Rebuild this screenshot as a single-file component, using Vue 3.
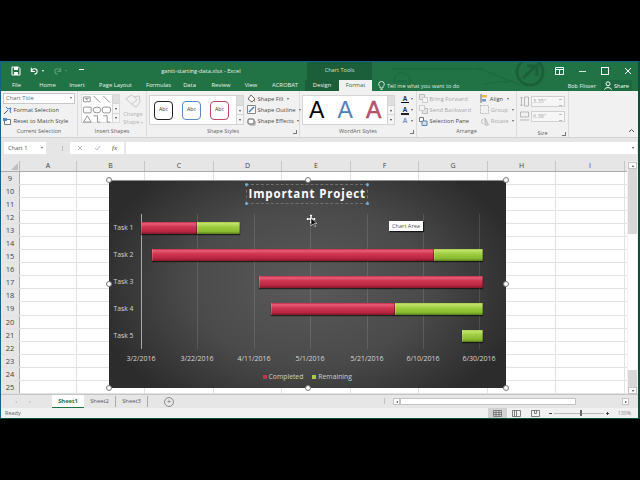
<template>
  <div class="screen">
    <div class="window">
      <!-- title bar + tabs share the green band -->
      <div class="head">
        <svg class="circuit" width="639" height="29" viewBox="0 0 639 29">
          <g fill="none" stroke="#1d6a40" stroke-width="1.500">
            <path d="M391 7h89l39 16M482 22l15-2h10" />
            <circle cx="480" cy="7" r="1.500" fill="#1d6a40" />
            <circle cx="401" cy="19" r="8" />
            <path d="M396 19h10" />
          </g>
          <g fill="none" stroke="#1b6039" stroke-width="3">
            <circle cx="529" cy="10" r="13" />
            <path d="M522 16l13-12M526 4h10v10" />
          </g>
        </svg>
        <header class="titlebar">
          <div class="qat">
            <svg width="10" height="10" viewBox="0 0 10 10"><path d="M1 1h6.500L9 2.500V9H1z" fill="none" stroke="#fff" /><path d="M3 1h4v3H3zM3 6h4v3H3z" fill="#fff" /></svg>
            <svg class="undo" width="9" height="10" viewBox="0 0 10 10"><path d="M2 5a3 3 0 1 1 3 3.500M1.500 1.500v4h4" fill="none" stroke="#fff" stroke-width="1.200" /></svg>
            <span class="caret white"></span>
            <svg class="redo" width="9" height="10" viewBox="0 0 10 10"><path d="M8 5a3 3 0 1 0-3 3.500M8.500 1.500v4h-4" fill="none" stroke="#5c9c78" stroke-width="1.200" /></svg>
            <span class="caret dim"></span>
            <span class="customize"></span>
          </div>
          <div class="doc-title">gantt-starting-data.xlsx - Excel</div>
          <div class="tools-label">Chart Tools</div>
          <div class="win-buttons">
            <svg width="9" height="8" viewBox="0 0 9 8"><path d="M.5.500h8v7h-8zM.5 2.500h8M4.500 2.500v5" fill="none" stroke="#fff" /></svg>
            <span class="min"></span>
            <span class="max"></span>
            <svg width="8" height="8" viewBox="0 0 8 8"><path d="M1 1l6 6M7 1L1 7" stroke="#fff" stroke-width="1" /></svg>
          </div>
        </header>

        <nav class="tabs">
          <span v-for="t in tabs" :key="t.name" class="tab" :style="{ width: t.w + 'px' }" :class="t.cls">{{ t.name }}</span>
          <span class="tell">
            <svg width="7" height="9" viewBox="0 0 7 9"><path d="M3.500.500a2.700 2.700 0 0 0-1.500 5V7h3V5.500a2.700 2.700 0 0 0-1.500-5zM2.500 8.500h2" fill="none" stroke="#fff" stroke-width=".8" /></svg>
            Tell me what you want to do
          </span>
          <span class="user">Bob Flisser</span>
          <span class="share">
            <svg width="8" height="9" viewBox="0 0 8 9"><circle cx="4" cy="2.800" r="2" fill="none" stroke="#fff" /><path d="M.5 8.500c.5-2.500 6.500-2.500 7 0" fill="none" stroke="#fff" /></svg>
            Share
          </span>
        </nav>
      </div>

      <!-- ribbon -->
      <section class="ribbon">
        <div class="group" style="width: 77px">
          <div class="group-body col">
            <div class="dropdown">Chart Title<span class="caret"></span></div>
            <div class="cmd">
              <svg width="9" height="9" viewBox="0 0 9 9"><path d="M1 8l4-4" stroke="#555" /><path d="M3 1l2 2 3-1-1 3 1 2" fill="none" stroke="#2f7ec0" /></svg>
              Format Selection
            </div>
            <div class="cmd">
              <svg width="9" height="9" viewBox="0 0 9 9"><path d="M1.500 2.500h6v5h-6z" fill="#fff" stroke="#777" /><path d="M0 1h4v3H0z" fill="#4a8cc7" /></svg>
              Reset to Match Style
            </div>
          </div>
          <div class="group-label">Current Selection</div>
        </div>

        <div class="group" style="width: 69px">
          <div class="group-body row">
            <div class="shape-gallery">
              <svg width="31" height="29" viewBox="0 0 31 29">
                <g fill="none" stroke="#777" stroke-width=".8">
                  <path d="M1.500 1.500h7v5h-7z" /><path d="M3 3l3 2M4 3h3" />
                  <path d="M12 .5l7 7M22 .5l7 7" />
                  <rect x="1.500" y="12" width="8" height="6" rx="1" />
                  <ellipse cx="15.500" cy="15" rx="4" ry="3" />
                  <rect x="21" y="12" width="8.500" height="6" rx="2" />
                  <path d="M5.500 21l-4 6.500h8zM12 21h4v6.500h3M22 21h4v6.500h3" />
                </g>
              </svg>
              <div class="gallery-scroll small"><i class="up dis"></i><i class="dn"></i><i class="more"></i></div>
            </div>
            <div class="change-shape">
              <svg width="16" height="15" viewBox="0 0 17 16"><path d="M1 5l6-4 6 5-6 5zM10 3l5-1 1 6-4 6-5-3" fill="none" stroke="#c4c4c4" /></svg>
              <span>Change</span><span>Shape <i class="caret dim2"></i></span>
            </div>
          </div>
          <div class="group-label">Insert Shapes</div>
        </div>

        <div class="group" style="width: 153px">
          <div class="group-body row">
            <div class="style-gallery">
              <span v-for="s in swatches" :key="s" class="swatch" :style="{ borderColor: s }">Abc</span>
              <div class="gallery-scroll"><i class="up dis"></i><i class="dn"></i><i class="more"></i></div>
            </div>
            <div class="col cmds">
              <div class="cmd"><svg width="9" height="9" viewBox="0 0 9 9"><path d="M1 5l3-4 4 4-3 3z" fill="#fff" stroke="#666" /><path d="M7.500 6v2" stroke="#c8a24a" /></svg>Shape Fill<i class="caret"></i></div>
              <div class="cmd"><svg width="9" height="9" viewBox="0 0 9 9"><path d="M.5.500h8v8h-8z" fill="#fff" stroke="#888" /><path d="M2 7l5-5" stroke="#4a7db5" stroke-width="1.500" /></svg>Shape Outline<i class="caret"></i></div>
              <div class="cmd"><svg width="9" height="9" viewBox="0 0 9 9"><rect x="1" y="2" width="6" height="5" rx="1" fill="#fff" stroke="#555" /><path d="M3 8h5V4" fill="none" stroke="#999" /></svg>Shape Effects<i class="caret"></i></div>
            </div>
          </div>
          <div class="group-label">Shape Styles<i class="launch"></i></div>
        </div>

        <div class="group" style="width: 117px">
          <div class="group-body row">
            <div class="art-gallery">
              <span class="art black">A</span>
              <span class="art blue">A</span>
              <span class="art red">A</span>
              <div class="gallery-scroll"><i class="up dis"></i><i class="dn"></i><i class="more"></i></div>
            </div>
            <div class="col art-cmds">
              <div class="art-cmd"><span class="mini-a">A</span><i class="bar" style="background:#000"></i><i class="caret"></i></div>
              <div class="art-cmd"><span class="mini-a">A</span><i class="bar" style="background:#222"></i><i class="caret"></i></div>
              <div class="art-cmd"><span class="mini-a soft">A</span><i class="caret"></i></div>
            </div>
          </div>
          <div class="group-label">WordArt Styles<i class="launch"></i></div>
        </div>

        <div class="group" style="width: 100px">
          <div class="group-body row">
            <div class="col" style="width: 62px">
              <div class="cmd off"><svg width="9" height="9" viewBox="0 0 9 9"><path d="M.5.500h5v5h-5z" fill="#e6e6e6" stroke="#bbb" /><path d="M3.500 3.500h5v5h-5z" fill="#f4f4f4" stroke="#ccc" /></svg>Bring Forward</div>
              <div class="cmd off"><svg width="9" height="9" viewBox="0 0 9 9"><path d="M3.500 3.500h5v5h-5z" fill="#e6e6e6" stroke="#bbb" /><path d="M.5.500h5v5h-5z" fill="#f4f4f4" stroke="#ccc" /></svg>Send Backward</div>
              <div class="cmd"><svg width="9" height="9" viewBox="0 0 9 9"><path d="M.5.500h4v4h-4z" fill="#fff" stroke="#777" /><path d="M3 4h5v4.500H3z" fill="#cfe0f0" stroke="#5c89b0" /></svg>Selection Pane</div>
            </div>
            <div class="col" style="width: 34px">
              <div class="cmd"><svg width="8" height="9" viewBox="0 0 8 9"><path d="M1 0v9" stroke="#666" /><path d="M2 1h5v2.500H2z" fill="#e7b94a" /><path d="M2 5h4v2.500H2z" fill="#6d9bc9" /></svg>Align<i class="caret"></i></div>
              <div class="cmd off"><svg width="9" height="9" viewBox="0 0 9 9"><path d="M.5.500h8v8h-8z" fill="none" stroke="#bbb" stroke-dasharray="2 1" /></svg>Group<i class="caret"></i></div>
              <div class="cmd off"><svg width="9" height="9" viewBox="0 0 9 9"><path d="M5 1v7h3.500z" fill="#ddd" stroke="#bbb" /><path d="M3 2A3 3 0 0 0 3 7" fill="none" stroke="#bbb" /></svg>Rotate<i class="caret"></i></div>
            </div>
          </div>
          <div class="group-label">Arrange</div>
        </div>

        <div class="group" style="width: 52px">
          <div class="group-body col size">
            <div class="size-row">
              <svg width="9" height="11" viewBox="0 0 9 11"><path d="M1.500 1v9M0 2.500L1.500 1 3 2.500M0 8.500L1.500 10 3 8.500M4.500 1h4v9h-4z" fill="none" stroke="#aaa" stroke-width=".8" /></svg>
              <span class="spin">3.35"<i class="arrows"></i></span>
            </div>
            <div class="size-row">
              <svg width="9" height="11" viewBox="0 0 9 11"><path d="M.5 1h8v5h-8zM0 9h9" fill="none" stroke="#aaa" stroke-width=".8" /></svg>
              <span class="spin">6.38"<i class="arrows"></i></span>
            </div>
          </div>
          <div class="group-label">Size<i class="launch"></i></div>
        </div>

        <div class="collapse"><svg width="7" height="5" viewBox="0 0 7 5"><path d="M1 4l2.500-2.500L6 4" fill="none" stroke="#555" /></svg></div>
      </section>

      <!-- formula bar -->
      <div class="formula">
        <div class="namebox">Chart 1<span class="caret"></span></div>
        <i class="grip"></i>
        <div class="fx">
          <svg width="6" height="6" viewBox="0 0 6 6"><path d="M1 1l4 4M5 1L1 5" stroke="#bdbdbd" /></svg>
          <svg width="7" height="6" viewBox="0 0 7 6"><path d="M1 3l2 2 3-4" fill="none" stroke="#bdbdbd" /></svg>
          <em>fx</em>
        </div>
        <div class="input"><span class="caret"></span></div>
      </div>

      <!-- sheet -->
      <div class="sheet">
        <div class="sheet-main">
          <div class="col-heads">
            <div class="corner"><i></i></div>
            <div v-for="c in columns" :key="c.name" class="col-head" :style="{ width: c.w + 'px' }">{{ c.name }}</div>
          </div>
          <div class="grid">
            <div v-for="r in rows" :key="r" class="row-line">
              <div class="row-head">{{ r }}</div>
              <div v-for="c in columns" :key="c.name" class="cell" :style="{ width: c.w + 'px' }"></div>
            </div>

            <!-- chart overlay -->
            <div class="chart">
              <div class="chart-title-wrap">
                <div class="chart-title">
                  Important Project
                  <i class="blue-dot tl"></i><i class="blue-dot tr"></i><i class="blue-dot bl"></i><i class="blue-dot br"></i>
                </div>
              </div>
              <div class="plot-row">
                <div class="task-names">
                  <span v-for="t in tasks" :key="t.name">{{ t.name }}</span>
                </div>
                <div class="plot">
                  <i v-for="(d, i) in dates" :key="d" class="gridline" :style="{ left: dayX(i * 20) + 'px' }"></i>
                  <div v-for="t in tasks" :key="t.name" class="track">
                    <span v-if="t.done" class="bar-part done" :style="barStyle(t.start, t.done)"></span>
                    <span v-if="t.left" class="bar-part todo" :style="barStyle(t.start + t.done, t.left)"></span>
                  </div>
                </div>
              </div>
              <div class="axis">
                <span v-for="(d, i) in dates" :key="d" class="axis-label" :style="{ left: dayX(i * 20) + 'px' }">{{ d }}</span>
              </div>
              <div class="legend">
                <i class="key red-key"></i>Completed
                <i class="key green-key"></i>Remaining
              </div>
              <i v-for="h in handles" :key="h" class="handle" :class="h"></i>
            </div>
            <svg class="pointer" width="12" height="14" viewBox="0 0 12 14">
              <path d="M5 0l2 2H6v2h2V3l2 2-2 2V6H6v2h1L5 10 3 8h1V6H2v1L0 5l2-2v1h2V2H3z" fill="#fff" stroke="#333" stroke-width=".5" />
              <path d="M5 4l0 8 2-2 2 3 1-1-2-2.500h3z" fill="#111" stroke="#fff" stroke-width=".5" />
            </svg>
            <div class="tip">Chart Area</div>
          </div>
        </div>
        <div class="vscroll">
          <i class="sb-btn"><b class="tri-up"></b></i>
          <div class="v-track"><div class="v-thumb"></div></div>
          <i class="sb-btn"><b class="tri-down"></b></i>
        </div>
      </div>

      <!-- sheet tabs -->
      <div class="sheet-tabs">
        <div class="sheet-nav"><b class="tri-left dim"></b><b class="tri-right dim"></b></div>
        <span class="sheet-tab active">Sheet1</span>
        <span class="sheet-tab">Sheet2</span>
        <span class="sheet-tab">Sheet3</span>
        <span class="add-sheet">+</span>
        <i class="tab-grip"></i>
        <div class="hscroll">
          <i class="sb-btn"><b class="tri-left"></b></i>
          <div class="h-thumb"></div>
          <i class="sb-btn end"><b class="tri-right"></b></i>
        </div>
      </div>

      <!-- status bar -->
      <footer class="status">
        <span>Ready</span>
        <div class="views">
          <span class="view on"><svg width="9" height="7" viewBox="0 0 9 7"><path d="M.5.500h8v6h-8zM.5 2.500h8M.5 4.500h8M3 .500v6M6 .500v6" fill="none" stroke="#666" stroke-width=".7" /></svg></span>
          <span class="view"><svg width="9" height="7" viewBox="0 0 9 7"><path d="M.5.500h8v6h-8zM4.500.500v6M2.500.500v6" fill="none" stroke="#666" stroke-width=".8" /></svg></span>
          <span class="view"><svg width="9" height="7" viewBox="0 0 9 7"><path d="M.5.500h8v6h-8zM3.500.500v3h2v-3" fill="none" stroke="#666" stroke-width=".8" /></svg></span>
        </div>
        <div class="zoom">
          <span class="z-btn"></span>
          <div class="z-track"><i></i></div>
          <span class="z-btn plus"></span>
          <span class="z-val">130%</span>
        </div>
      </footer>
    </div>
  </div>
</template>

<script setup>
const tabs = [
  { name: 'File', w: 25 },
  { name: 'Home', w: 37 },
  { name: 'Insert', w: 22 },
  { name: 'Page Layout', w: 55 },
  { name: 'Formulas', w: 31 },
  { name: 'Data', w: 31 },
  { name: 'Review', w: 32 },
  { name: 'View', w: 28 },
  { name: 'ACROBAT', w: 40 },
  { name: 'Design', w: 34, cls: 'design' },
  { name: 'Format', w: 33, cls: 'format' }
]

const swatches = ['#222222', '#5b8ac4', '#bd4b63']

const columns = [
  { name: 'A', w: 57 }, { name: 'B', w: 68 }, { name: 'C', w: 69 },
  { name: 'D', w: 68 }, { name: 'E', w: 69 }, { name: 'F', w: 68 },
  { name: 'G', w: 69 }, { name: 'H', w: 68 }, { name: 'I', w: 69 }
]

const rows = Array.from({ length: 17 }, (_, i) => i + 9)

// start / lengths are days after 3/2/2016
const tasks = [
  { name: 'Task 1', start: 0, done: 20, left: 15 },
  { name: 'Task 2', start: 4, done: 100, left: 17.2 },
  { name: 'Task 3', start: 42, done: 79.2, left: 0 },
  { name: 'Task 4', start: 46, done: 44, left: 31.2 },
  { name: 'Task 5', start: 113.8, done: 0, left: 7.4 }
]

const dates = ['3/2/2016', '3/22/2016', '4/11/2016', '5/1/2016', '5/21/2016', '6/10/2016', '6/30/2016']

const handles = ['h-tl', 'h-tm', 'h-tr', 'h-ml', 'h-mr', 'h-bl', 'h-bm', 'h-br']

const pxPerDay = 2.82
const dayX = (d) => Math.round(d * pxPerDay)
const barStyle = (start, len) => ({
  left: dayX(start) + 'px',
  width: dayX(start + len) - dayX(start) + 'px'
})
</script>

<style>
html, body { background: #000; }
</style>

<style scoped>
.screen {
  width: 640px;
  height: 480px;
  padding-top: 61px;
  box-sizing: border-box;
  background: #000;
  overflow: hidden;
  font-family: "Open Sans", "Liberation Sans", sans-serif;
  font-size: 5.800px;
  color: #444;
}
.window {
  width: 640px;
  height: 358px;
  box-sizing: border-box;
  border-top: 1px solid #12628c;
  border-left: 1px solid #12628c;
  border-right: 2px solid #0f4f3a;
  border-bottom: 1px solid #0f4f3a;
  display: flex;
  flex-direction: column;
  background: #f1f1f1;
}

/* title bar */
.head { position: relative; flex: none; background: #217346; }
.titlebar {
  position: relative;
  height: 18px;
  display: flex;
  align-items: center;
  color: #fff;
}
.circuit { position: absolute; left: 0; top: 0; }
.qat { display: flex; align-items: center; padding-left: 10px; gap: 3px; width: 150px; box-sizing: border-box; flex: none; }
.qat .undo { margin-left: 6px; }
.qat .redo { margin-left: 6px; }
.customize { width: 5px; height: 3px; border-top: 1px solid #fff; margin-left: 9px; }
.doc-title { font-size: 5.700px; width: 100px; flex: none; text-align: center; color: #e9f2ec; white-space: nowrap; }
.tools-label {
  width: 65px;
  height: 18px;
  margin-left: 56px;
  line-height: 17px;
  background: #1b5e3a;
  text-align: center;
  color: #cfe3d6;
  font-size: 5.600px;
  flex: none;
}
.win-buttons { margin-left: auto; display: flex; align-items: center; gap: 15px; padding-right: 6px; }
.min { width: 7px; height: 1px; background: #d9e8df; }
.max { width: 6px; height: 6px; border: 1px solid #fff; }

/* tabs */
.tabs {
  height: 11px;
  display: flex;
  align-items: center;
  color: #fff;
  padding-left: 3px;
  position: relative;
}
.tab { text-align: center; font-size: 5.800px; line-height: 11px; height: 11px; color: #e8f2ec; flex: none; white-space: nowrap; }
.tab.design { background: #1b5e3a; }
.tab.format { background: #f1f1f1; color: #217346; }
.tell { display: flex; align-items: center; gap: 2px; margin-left: 6px; color: #dcebe2; font-size: 5.500px; white-space: nowrap; }
.user { margin-left: auto; color: #e8f2ec; font-size: 5.600px; margin-right: 5px; }
.share { background: #1b6a3f; height: 11px; display: flex; align-items: center; gap: 2px; padding: 0 3px; margin-right: 6px; font-size: 5.600px; }

/* ribbon */
.ribbon {
  height: 47px;
  flex: none;
  display: flex;
  background: #f1f1f1;
  border-bottom: 1px solid #d2d2d2;
  box-sizing: border-box;
  position: relative;
}
.group {
  flex: none;
  position: relative;
  display: flex;
  flex-direction: column;
  border-right: 1px solid #dcdcdc;
  box-sizing: border-box;
  padding: 2px 2px 0;
}
.group-body { height: 34px; flex: none; }
.group-label { text-align: center; font-size: 5.500px; color: #5f5f5f; line-height: 9px; position: relative; }
.row { display: flex; gap: 2px; }
.col { display: flex; flex-direction: column; }
.launch {
  position: absolute;
  right: 0;
  bottom: 2px;
  width: 3px;
  height: 3px;
  border-right: 1px solid #777;
  border-bottom: 1px solid #777;
}
.dropdown {
  width: 72px;
  height: 11px;
  background: #fff;
  border: 1px solid #c8c8c8;
  box-sizing: border-box;
  display: flex;
  align-items: center;
  justify-content: space-between;
  padding: 0 2px;
  font-size: 5.800px;
  color: #666;
  margin-bottom: 1px;
}
.cmd {
  height: 11.500px;
  display: flex;
  align-items: center;
  gap: 1.500px;
  white-space: nowrap;
  font-size: 5.800px;
  color: #484848;
}
.cmd.off { color: #ababab; }
.cmd .caret { margin-left: 2px; }
.caret {
  display: inline-block;
  width: 0;
  height: 0;
  border-left: 1.500px solid transparent;
  border-right: 1.500px solid transparent;
  border-top: 2px solid #666;
}
.caret.white { border-top-color: #fff; }
.caret.dim { border-top-color: #5c9c78; }
.caret.dim2 { border-top-color: #bbb; }

/* galleries */
.shape-gallery {
  width: 39px;
  height: 29px;
  margin-top: 1px;
  display: flex;
  background: #fff;
  border: 1px solid #dcdcdc;
  box-sizing: border-box;
  margin-left: 1px;
  justify-content: space-between;
}
.gallery-scroll {
  width: 6px;
  display: flex;
  flex-direction: column;
  border-left: 1px solid #d4d4d4;
  background: #f5f5f5;
  flex: none;
}
.gallery-scroll i { flex: 1; border-bottom: 1px solid #d4d4d4; position: relative; }
.gallery-scroll i:last-child { border-bottom: none; }
.gallery-scroll i::after {
  content: "";
  position: absolute;
  left: 1.500px;
  top: 45%;
  border-left: 1.500px solid transparent;
  border-right: 1.500px solid transparent;
  border-top: 2px solid #444;
}
.gallery-scroll i.up { background: #dedede; }
.gallery-scroll i.up::after { display: none; }
.change-shape {
  width: 24px;
  display: flex;
  flex-direction: column;
  align-items: center;
  font-size: 5.500px;
  line-height: 7.500px;
  color: #b2b2b2;
  padding-top: 1px;
}
.change-shape svg { margin-bottom: 2px; }
.style-gallery {
  width: 95px;
  height: 30px;
  margin-top: 2px;
  flex: none;
  background: #fff;
  border: 1px solid #d4d4d4;
  box-sizing: border-box;
  display: flex;
  align-items: center;
  gap: 9px;
  padding-left: 4px;
  position: relative;
}
.style-gallery .gallery-scroll { position: absolute; right: 0; top: 0; bottom: 0; }
.swatch {
  width: 19px;
  height: 19px;
  border: 1.500px solid;
  border-radius: 4px;
  box-sizing: border-box;
  text-align: center;
  line-height: 14px;
  font-size: 5.200px;
  color: #333;
  flex: none;
}
.cmds { margin-left: 1px; }
.art-gallery {
  width: 93px;
  height: 30px;
  margin-top: 2px;
  flex: none;
  background: #fff;
  border: 1px solid #d4d4d4;
  box-sizing: border-box;
  display: flex;
  align-items: center;
  position: relative;
  padding-left: 6px;
  gap: 13.500px;
  font-family: "Liberation Sans", Arial, sans-serif;
  font-size: 23px;
}
.art-gallery .gallery-scroll { position: absolute; right: 0; top: 0; bottom: 0; }
.art { width: 15px; text-align: center; line-height: 28px; }
.art.black { color: #000; }
.art.blue { color: #4f81bd; }
.art.red { color: #c0566e; -webkit-text-stroke: .5px #a03c55; }
.art-cmds { margin-left: 2px; }
.art-cmd { height: 11.500px; display: flex; align-items: center; gap: 2px; position: relative; width: 18px; padding-left: 2px; box-sizing: border-box; }
.mini-a { font-size: 6.500px; font-weight: 700; color: #333; line-height: 8px; width: 8px; text-align: center; }
.mini-a.soft { color: #6d97c9; }
.art-cmd .bar { position: absolute; left: 2px; bottom: 1px; width: 8px; height: 1.500px; }
.size { padding: 2px 0 0 1px; gap: 3px; }
.size-row { display: flex; align-items: center; gap: 2px; height: 12px; }
.spin {
  width: 34px;
  height: 11px;
  border: 1px solid #d0d0d0;
  box-sizing: border-box;
  background: #f6f6f6;
  color: #a5a5a5;
  line-height: 9px;
  padding-left: 1px;
  font-size: 5.600px;
  position: relative;
}
.arrows { position: absolute; right: 2px; top: 2px; width: 3px; height: 5px; border-top: 1px solid #bbb; border-bottom: 1px solid #bbb; }
.collapse { margin-left: auto; margin-right: 3px; align-self: flex-end; padding-bottom: 2px; }

/* formula bar */
.formula {
  height: 23px;
  flex: none;
  background: #e6e6e6;
  display: flex;
  align-items: flex-start;
  padding-top: 4px;
  box-sizing: border-box;
}
.namebox {
  width: 42px;
  height: 12px;
  margin-left: 3px;
  background: #fff;
  display: flex;
  justify-content: space-between;
  align-items: center;
  padding: 0 3px 0 4px;
  box-sizing: border-box;
  font-size: 5.800px;
  color: #555;
  flex: none;
}
.grip { width: 1px; height: 5px; background: #bbb; margin: 4px 7px 0 16px; flex: none; }
.fx {
  width: 54px;
  height: 12px;
  background: #fff;
  display: flex;
  align-items: center;
  gap: 11px;
  padding-left: 7px;
  box-sizing: border-box;
  margin-right: 2px;
  flex: none;
}
.fx em { font-family: "Liberation Serif", serif; font-size: 7px; color: #555; }
.input {
  flex: 1;
  height: 12px;
  background: #fff;
  margin-right: 1px;
  display: flex;
  align-items: center;
  justify-content: flex-end;
  padding-right: 3px;
}

/* sheet */
.sheet { flex: 1; display: flex; min-height: 0; background: #fff; }
.sheet-main { width: 626px; flex: none; display: flex; flex-direction: column; }
.col-heads { height: 10px; display: flex; background: #e6e6e6; flex: none; border-bottom: 1px solid #ababab; }
.corner { width: 19px; flex: none; position: relative; border-right: 1px solid #bbb; box-sizing: border-box; }
.corner i { position: absolute; right: 1px; bottom: 1px; border-left: 7px solid transparent; border-bottom: 7px solid #bdbdbd; }
.col-head {
  flex: none;
  box-sizing: border-box;
  border-right: 1px solid #c6c6c6;
  text-align: center;
  line-height: 10px;
  font-size: 7px;
  color: #444;
}
.grid { position: relative; flex: 1; overflow: hidden; }
.row-line { height: 13.060px; display: flex; box-sizing: border-box; border-bottom: 1px solid #e2e2e2; }
.row-head {
  width: 19px;
  flex: none;
  box-sizing: border-box;
  background: #e6e6e6;
  border-right: 1px solid #ababab;
  text-align: center;
  font-size: 7.500px;
  line-height: 12px;
  color: #444;
}
.cell { flex: none; box-sizing: border-box; border-right: 1px solid #e2e2e2; }

/* chart */
.chart {
  position: absolute;
  left: 107.500px;
  top: 8px;
  width: 397.500px;
  height: 208px;
  box-sizing: border-box;
  background: radial-gradient(ellipse 55% 70% at 50% 50%, #5a5a5a 0%, #4a4a4a 55%, #2c2c2c 100%);
  border-top: 1px solid #8f8f8f;
  display: flex;
  flex-direction: column;
  color: #ddd;
}
.chart-title-wrap { display: flex; justify-content: center; padding-top: 3px; flex: none; }
.chart-title {
  position: relative;
  width: 122px;
  height: 20px;
  box-sizing: border-box;
  border: 1px dashed #707070;
  color: #fff;
  font-weight: 700;
  font-size: 11.500px;
  letter-spacing: .85px;
  line-height: 18px;
  text-align: center;
  white-space: nowrap;
}
.blue-dot { position: absolute; width: 3px; height: 3px; background: #63b3ee; border-radius: 50%; }
.blue-dot.tl { left: -2px; top: -2px; }
.blue-dot.tr { right: -2px; top: -2px; }
.blue-dot.bl { left: -2px; bottom: -2px; }
.blue-dot.br { right: -2px; bottom: -2px; }
.plot-row { display: flex; padding-top: 10px; flex: none; }
.task-names {
  width: 32.500px;
  flex: none;
  display: flex;
  flex-direction: column;
  font-size: 6.800px;
  color: #d6d6d6;
  padding-left: 5px;
  box-sizing: border-box;
}
.task-names span { height: 27px; line-height: 27px; }
.plot {
  position: relative;
  height: 135px;
  flex: none;
  width: 360px;
}
.plot::before { content: ""; position: absolute; left: 0; top: 0; bottom: 0; width: 1px; background: #9c9c9c; }
.gridline { position: absolute; top: 0; bottom: 0; width: 1px; background: rgba(255, 255, 255, .12); }
.track { height: 27px; position: relative; }
.bar-part {
  position: absolute;
  top: 8px;
  height: 11.500px;
  box-sizing: border-box;
  box-shadow: 0 1px 1px rgba(0, 0, 0, .6), inset 1px 0 0 rgba(255, 255, 255, .18), inset -1px 0 0 rgba(0, 0, 0, .25);
}
.done { background: linear-gradient(#c42c48 0, #e85c77 14%, #d03652 40%, #ba2540 78%, #7f1a2c 100%); }
.todo { background: linear-gradient(#a4cc4c 0, #c0e268 14%, #9ecd40 40%, #8abb31 78%, #5a7f20 100%); }
.axis { position: relative; height: 20px; margin-left: 32.500px; flex: none; }
.axis-label {
  position: absolute;
  top: 5px;
  transform: translateX(-50%);
  font-size: 7px;
  color: #d6d6d6;
  white-space: nowrap;
}
.legend {
  display: flex;
  align-items: center;
  justify-content: center;
  font-size: 6.800px;
  color: #cfcfcf;
  padding-top: 3px;
  flex: none;
}
.key { width: 4px; height: 4px; margin: 0 2px 0 0; flex: none; }
.red-key { background: #c9304b; }
.green-key { background: #a5cc46; margin-left: 9px; }
.handle {
  position: absolute;
  width: 6px;
  height: 6px;
  background: #fff;
  border: 1px solid #777;
  border-radius: 50%;
  box-sizing: border-box;
}
.h-tl { left: -3px; top: -4px; }
.h-tm { left: 196px; top: -4px; }
.h-tr { right: -3px; top: -4px; }
.h-ml { left: -3px; top: 100px; }
.h-mr { right: -3px; top: 100px; }
.h-bl { left: -3px; bottom: -3px; }
.h-bm { left: 196px; bottom: -3px; }
.h-br { right: -3px; bottom: -3px; }
.pointer { position: absolute; left: 305px; top: 42px; }
.tip {
  position: absolute;
  left: 388px;
  top: 49px;
  width: 34px;
  height: 10px;
  background: #fff;
  font-size: 5.600px;
  color: #555;
  text-align: center;
  line-height: 10px;
  box-shadow: 1px 1px 1px rgba(0, 0, 0, .7);
}

/* scrollbars */
.vscroll { flex: 1; display: flex; flex-direction: column; background: #f1f1f1; padding: 1px 1px 0; }
.sb-btn { height: 7px; flex: none; background: #fff; border: 1px solid #c4c4c4; box-sizing: border-box; display: flex; align-items: center; justify-content: center; }
.v-track { flex: 1; background: #d8d8d8; display: flex; flex-direction: column; padding-top: 65px; padding-bottom: 17px; box-sizing: border-box; min-height: 0; }
.v-thumb { flex: 1; background: #fff; }
b[class^="tri-"] { display: block; width: 0; height: 0; }
.tri-up { border-left: 1.500px solid transparent; border-right: 1.500px solid transparent; border-bottom: 2px solid #444; }
.tri-down { border-left: 1.500px solid transparent; border-right: 1.500px solid transparent; border-top: 2px solid #444; }
.tri-left { border-top: 1.500px solid transparent; border-bottom: 1.500px solid transparent; border-right: 2px solid #444; }
.tri-right { border-top: 1.500px solid transparent; border-bottom: 1.500px solid transparent; border-left: 2px solid #444; }
.tri-left.dim { border-right-color: #bbb; }
.tri-right.dim { border-left-color: #bbb; }

/* sheet tabs */
.sheet-tabs {
  height: 14px;
  flex: none;
  background: #e6e6e6;
  display: flex;
  align-items: stretch;
  border-top: 1px solid #c6c6c6;
  box-sizing: border-box;
  font-size: 5.800px;
}
.sheet-nav { width: 51px; flex: none; display: flex; align-items: center; gap: 12px; padding-left: 14px; box-sizing: border-box; }
.sheet-tab { width: 32px; flex: none; text-align: center; line-height: 11px; color: #555; border-right: 1px solid #aaa; margin: 1px 0; box-sizing: border-box; }
.sheet-tab.active { background: #fff; color: #217346; font-weight: 700; border-right: none; border-bottom: 1px solid #217346; margin: 0; height: 13px; line-height: 12px; }
.add-sheet {
  width: 8px;
  height: 8px;
  border: 1px solid #888;
  border-radius: 50%;
  margin: 2px 0 0 16px;
  line-height: 7px;
  text-align: center;
  font-size: 7px;
  color: #666;
  flex: none;
}
.tab-grip { width: 1px; height: 6px; background: #c0c0c0; margin: 3px 0 0 210px; flex: none; }
.hscroll { margin-left: 8px; display: flex; align-items: center; width: 236px; }
.hscroll .sb-btn { width: 7px; height: 7px; }
.h-thumb { width: 176px; height: 7px; background: #fff; border: 1px solid #c4c4c4; box-sizing: border-box; margin-right: 46px; }

/* status bar */
.status {
  height: 10px;
  flex: none;
  background: #f1f1f1;
  display: flex;
  align-items: center;
  padding-left: 4px;
  font-size: 5.500px;
  color: #666;
}
.views { margin-left: 467px; display: flex; }
.view { width: 19px; height: 10px; display: flex; align-items: center; justify-content: center; flex: none; }
.view.on { background: #d2d2d2; }
.zoom { display: flex; align-items: center; margin-left: 4px; }
.z-btn { width: 3px; height: 1px; background: #444; position: relative; flex: none; }
.z-btn.plus::after { content: ""; position: absolute; left: 1px; top: -1px; width: 1px; height: 3px; background: #444; }
.z-track { width: 50px; height: 1px; background: #bbb; margin: 0 2px; position: relative; }
.z-track i { position: absolute; left: 26px; top: -2.500px; width: 2px; height: 6px; background: #666; }
.z-val { margin-left: 9px; color: #888; font-size: 5.300px; }
</style>
